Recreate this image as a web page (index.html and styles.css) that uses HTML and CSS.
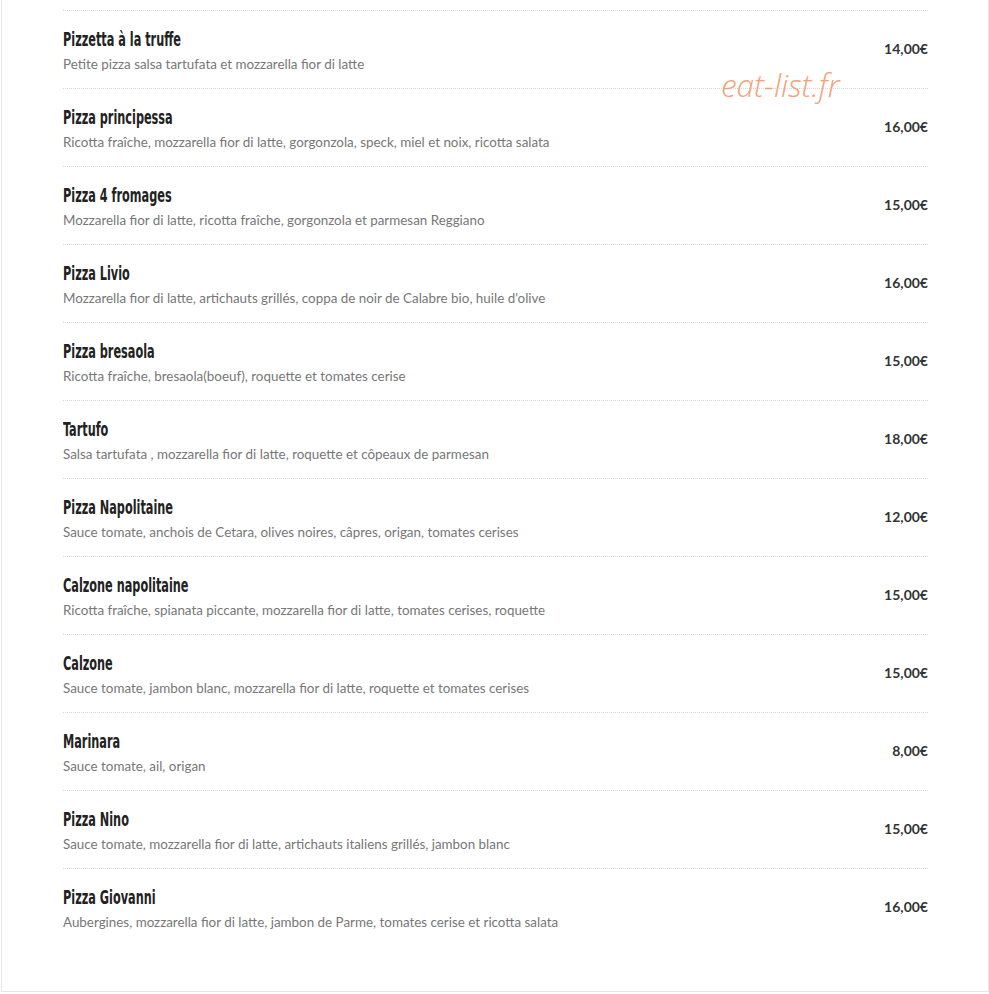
FILE: index.html
```html
<!DOCTYPE html>
<html lang="fr">
<head>
    <meta charset="UTF-8">
    <meta name="viewport" content="width=device-width, initial-scale=1.0">
    <title>Carte - Pizzas</title>
    <link rel="stylesheet" href="styles.css">
</head>
<body>
    <div class="menu-box">
        <span class="watermark">eat-list.fr</span>
        <ul class="menu-list">
            <li class="menu-item">
                <div class="item-text">
                    <h3>Pizzetta à la truffe</h3>
                    <p>Petite pizza salsa tartufata et mozzarella fior di latte</p>
                </div>
                <span class="price">14,00€</span>
            </li>
            <li class="menu-item">
                <div class="item-text">
                    <h3>Pizza principessa</h3>
                    <p>Ricotta fraîche, mozzarella fior di latte, gorgonzola, speck, miel et noix, ricotta salata</p>
                </div>
                <span class="price">16,00€</span>
            </li>
            <li class="menu-item">
                <div class="item-text">
                    <h3>Pizza 4 fromages</h3>
                    <p>Mozzarella fior di latte, ricotta fraîche, gorgonzola et parmesan Reggiano</p>
                </div>
                <span class="price">15,00€</span>
            </li>
            <li class="menu-item">
                <div class="item-text">
                    <h3>Pizza Livio</h3>
                    <p>Mozzarella fior di latte, artichauts grillés, coppa de noir de Calabre bio, huile d'olive</p>
                </div>
                <span class="price">16,00€</span>
            </li>
            <li class="menu-item">
                <div class="item-text">
                    <h3>Pizza bresaola</h3>
                    <p>Ricotta fraîche, bresaola(boeuf), roquette et tomates cerise</p>
                </div>
                <span class="price">15,00€</span>
            </li>
            <li class="menu-item">
                <div class="item-text">
                    <h3>Tartufo</h3>
                    <p>Salsa tartufata , mozzarella fior di latte, roquette et côpeaux de parmesan</p>
                </div>
                <span class="price">18,00€</span>
            </li>
            <li class="menu-item">
                <div class="item-text">
                    <h3>Pizza Napolitaine</h3>
                    <p>Sauce tomate, anchois de Cetara, olives noires, câpres, origan, tomates cerises</p>
                </div>
                <span class="price">12,00€</span>
            </li>
            <li class="menu-item">
                <div class="item-text">
                    <h3>Calzone napolitaine</h3>
                    <p>Ricotta fraîche, spianata piccante, mozzarella fior di latte, tomates cerises, roquette</p>
                </div>
                <span class="price">15,00€</span>
            </li>
            <li class="menu-item">
                <div class="item-text">
                    <h3>Calzone</h3>
                    <p>Sauce tomate, jambon blanc, mozzarella fior di latte, roquette et tomates cerises</p>
                </div>
                <span class="price">15,00€</span>
            </li>
            <li class="menu-item">
                <div class="item-text">
                    <h3>Marinara</h3>
                    <p>Sauce tomate, ail, origan</p>
                </div>
                <span class="price">8,00€</span>
            </li>
            <li class="menu-item">
                <div class="item-text">
                    <h3>Pizza Nino</h3>
                    <p>Sauce tomate, mozzarella fior di latte, artichauts italiens grillés, jambon blanc</p>
                </div>
                <span class="price">15,00€</span>
            </li>
            <li class="menu-item">
                <div class="item-text">
                    <h3>Pizza Giovanni</h3>
                    <p>Aubergines, mozzarella fior di latte, jambon de Parme, tomates cerise et ricotta salata</p>
                </div>
                <span class="price">16,00€</span>
            </li>
        </ul>
    </div>
</body>
</html>
```

FILE: styles.css
```css
* {
    box-sizing: border-box;
    margin: 0;
    padding: 0;
}
body {
    background-color: #fff;
    font-family: Lato, "Open Sans", sans-serif;
}
.menu-box {
    position: relative;
    margin-left: 1px;
    width: 988px;
    border: 1px solid #e6e6e6;
    border-top: none;
    padding: 10px 60px 45px 61px;
}
.menu-list {
    list-style: none;
}
.menu-item {
    display: flex;
    justify-content: space-between;
    align-items: center;
    height: 78px;
    padding-top: 3px;
    border-top: 1px dotted #d8d8d8;
}
.item-text h3 {
    display: inline-block;
    font-family: "DejaVu Sans Condensed", "Liberation Sans", sans-serif;
    font-weight: 700;
    font-size: 19px;
    line-height: 24px;
    color: #222;
    /* condensed headline look */
    transform: scaleX(0.66);
    transform-origin: left center;
    white-space: nowrap;
}
.item-text p {
    margin-top: 2px;
    font-size: 13.4px;
    line-height: 22px;
    color: #777;
}
.price {
    font-weight: 700;
    font-size: 14px;
    color: #333;
    margin-top: -6px;
}

/* watermark */
.watermark {
    position: absolute;
    left: 719px;
    top: 63px;
    font-family: "Open Sans", sans-serif;
    font-style: italic;
    font-weight: 300;
    font-size: 31.5px;
    color: #f2a27c;
}
```
